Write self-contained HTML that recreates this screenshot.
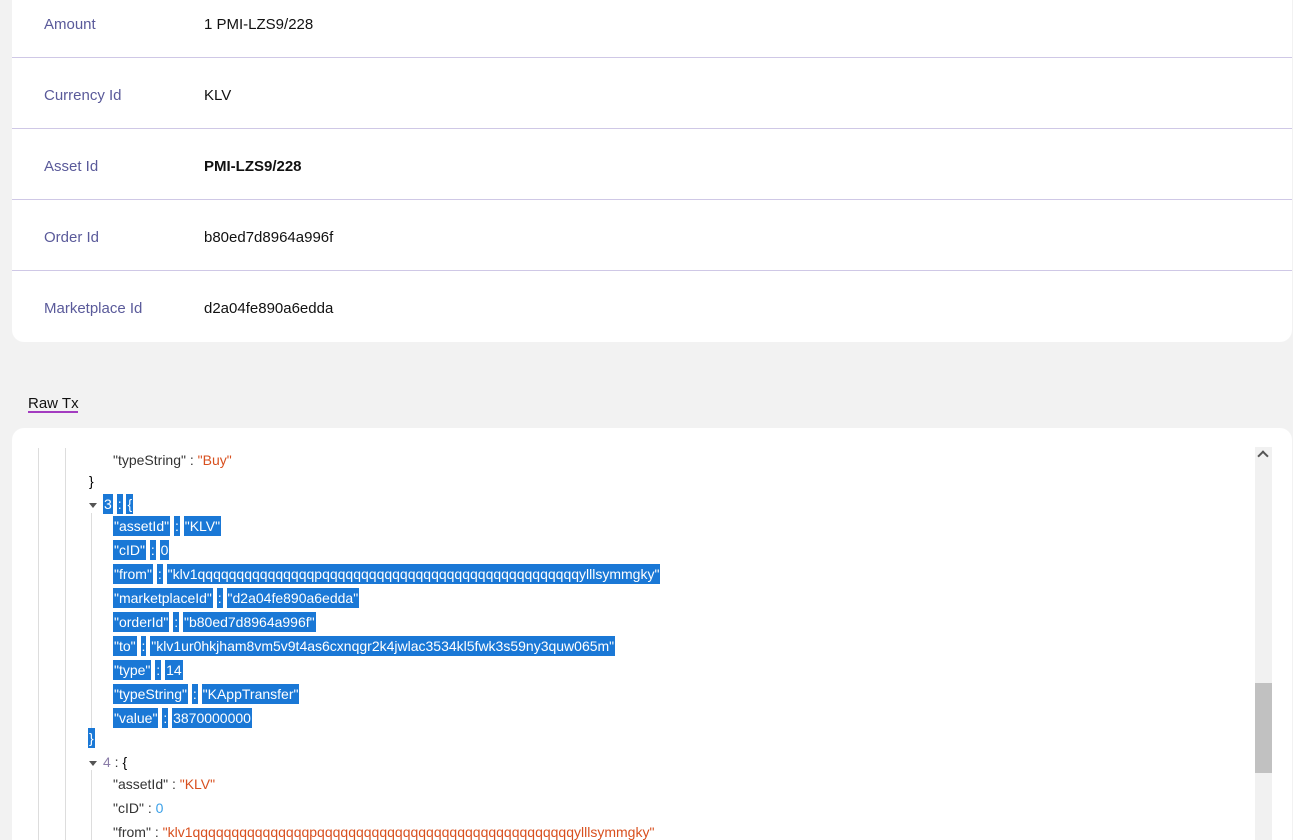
<!DOCTYPE html>
<html><head><meta charset="utf-8"><style>
html,body{margin:0;width:1293px;height:840px;overflow:hidden}
body{background:#f2f2f2;font-family:"Liberation Sans",sans-serif;position:relative}
.card{position:absolute;left:12px;width:1280px;background:#fff;overflow:hidden}
.row{position:absolute;left:0;width:1280px;height:70px;border-bottom:1px solid #cfc8e6}
.k{position:absolute;left:32px;line-height:46px;font-size:15px;color:#5a5a9a}
.v{position:absolute;left:192px;line-height:46px;font-size:15px;color:#111}
.l{position:absolute;font-size:14px;white-space:nowrap;line-height:18px;color:#333}
.s{color:#d8501f}.n{color:#3aa0e8}
.h{background:#1a78d6;color:#fff;padding:2px 1px}
.vl{position:absolute;width:1px;background:#ddd}
.tri{display:inline-block;width:0;height:0;border-left:4px solid transparent;border-right:4px solid transparent;border-top:5px solid #555;vertical-align:middle;margin-right:6px}
</style></head><body>
<div class="card" style="top:-13px;height:355px;border-radius:0 0 12px 12px">
<div class="row" style="top:0"><div class="k" style="top:15px">Amount</div><div class="v" style="top:15px">1 PMI-LZS9/228</div></div>
<div class="row" style="top:71px"><div class="k" style="top:15px">Currency Id</div><div class="v" style="top:15px">KLV</div></div>
<div class="row" style="top:142px"><div class="k" style="top:15px">Asset Id</div><div class="v" style="top:15px;font-weight:bold">PMI-LZS9/228</div></div>
<div class="row" style="top:213px"><div class="k" style="top:15px">Order Id</div><div class="v" style="top:15px">b80ed7d8964a996f</div></div>
<div class="row" style="top:284px;border:none"><div class="k" style="top:15px">Marketplace Id</div><div class="v" style="top:15px">d2a04fe890a6edda</div></div>
</div>
<div style="position:absolute;left:28px;top:395px;font-size:15px;color:#111">Raw Tx</div>
<div style="position:absolute;left:28px;top:411px;width:50px;height:2px;background:#a33cc0"></div>
<div class="card" style="top:428px;height:412px;border-radius:12px 12px 0 0">
<div class="vl" style="left:26px;top:20px;height:420px"></div>
<div class="vl" style="left:53px;top:20px;height:420px"></div>
<div class="vl" style="left:79px;top:85px;height:220px"></div>
<div class="vl" style="left:79px;top:342px;height:100px"></div>
<div style="position:absolute;left:1243px;top:19px;width:17px;height:411px;background:#f1f1f1"></div>
<div style="position:absolute;left:1243px;top:255px;width:17px;height:90px;background:#c1c1c1"></div>
<div style="position:absolute;left:1247px;top:24px;width:6px;height:6px;border-left:2px solid #555;border-top:2px solid #555;transform:rotate(45deg)"></div>
</div>
<div class="l" style="left:113px;top:451px">"typeString" : <span class="s">"Buy"</span></div>
<div class="l" style="left:89px;top:472px;color:#000">}</div>
<div class="l" style="left:89px;top:495px"><span class="tri"></span><span class="h">3</span> <span class="h">:</span> <span class="h">{</span></div>
<div class="l" style="left:113px;top:517px"><span class="h">"assetId"</span> <span class="h">:</span> <span class="h">"KLV"</span></div>
<div class="l" style="left:113px;top:541px"><span class="h">"cID"</span> <span class="h">:</span> <span class="h">0</span></div>
<div class="l" style="left:113px;top:565px"><span class="h">"from"</span> <span class="h">:</span> <span class="h">"klv1qqqqqqqqqqqqqqqpqqqqqqqqqqqqqqqqqqqqqqqqqqqqqqqqqylllsymmgky"</span></div>
<div class="l" style="left:113px;top:589px"><span class="h">"marketplaceId"</span> <span class="h">:</span> <span class="h">"d2a04fe890a6edda"</span></div>
<div class="l" style="left:113px;top:613px"><span class="h">"orderId"</span> <span class="h">:</span> <span class="h">"b80ed7d8964a996f"</span></div>
<div class="l" style="left:113px;top:637px"><span class="h">"to"</span> <span class="h">:</span> <span class="h">"klv1ur0hkjham8vm5v9t4as6cxnqgr2k4jwlac3534kl5fwk3s59ny3quw065m"</span></div>
<div class="l" style="left:113px;top:661px"><span class="h">"type"</span> <span class="h">:</span> <span class="h">14</span></div>
<div class="l" style="left:113px;top:685px"><span class="h">"typeString"</span> <span class="h">:</span> <span class="h">"KAppTransfer"</span></div>
<div class="l" style="left:113px;top:709px"><span class="h">"value"</span> <span class="h">:</span> <span class="h">3870000000</span></div>
<div class="l" style="left:88px;top:729px"><span class="h">}</span></div>
<div class="l" style="left:89px;top:753px"><span class="tri"></span><span style="color:#8a7ca8">4</span> : <span style="color:#000">{</span></div>
<div class="l" style="left:113px;top:775px">"assetId" : <span class="s">"KLV"</span></div>
<div class="l" style="left:113px;top:799px">"cID" : <span class="n">0</span></div>
<div class="l" style="left:113px;top:823px">"from" : <span class="s">"klv1qqqqqqqqqqqqqqqpqqqqqqqqqqqqqqqqqqqqqqqqqqqqqqqqqylllsymmgky"</span></div>
</body></html>
